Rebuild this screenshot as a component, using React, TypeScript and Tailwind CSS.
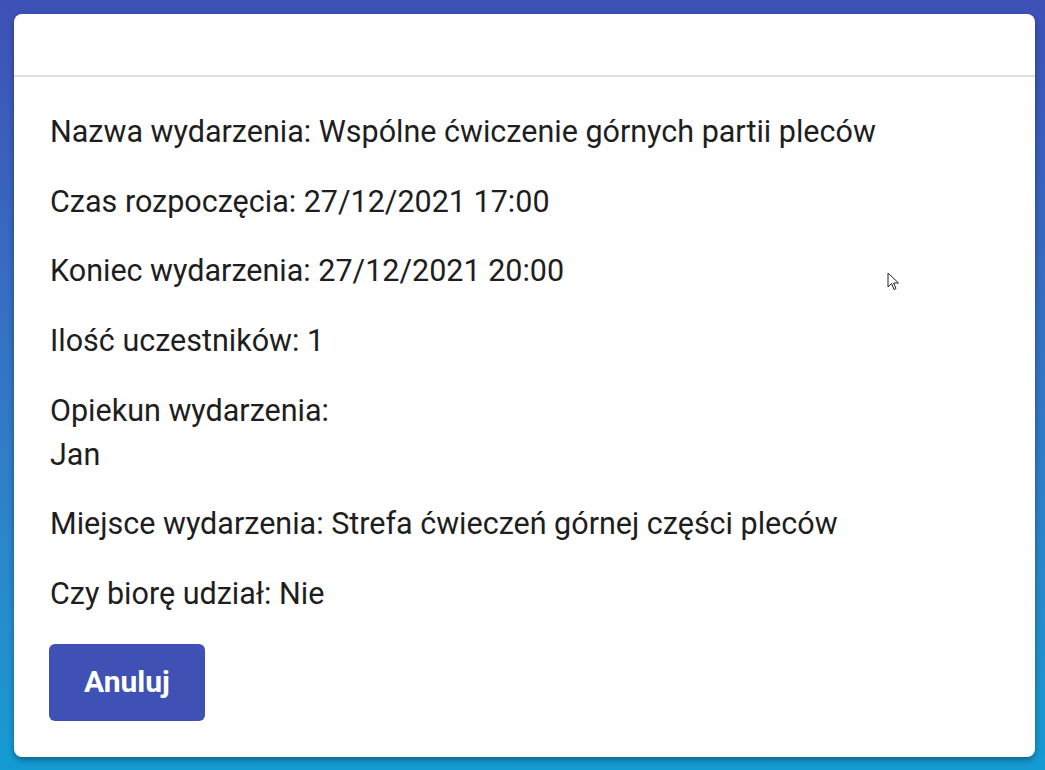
import React from 'react'

const rows: { label: string; value: string; wrap?: boolean }[] = [
  { label: 'Nazwa wydarzenia:', value: 'Wspólne ćwiczenie górnych partii pleców' },
  { label: 'Czas rozpoczęcia:', value: '27/12/2021 17:00' },
  { label: 'Koniec wydarzenia:', value: '27/12/2021 20:00' },
  { label: 'Ilość uczestników:', value: '1' },
  { label: 'Opiekun wydarzenia:', value: 'Jan', wrap: true },
  { label: 'Miejsce wydarzenia:', value: 'Strefa ćwieczeń górnej części pleców' },
  { label: 'Czy biorę udział:', value: 'Nie' },
]

export default function App() {
  return (
    <div
      className="relative w-[1045px] h-[770px] bg-gradient-to-b from-[#3d51b7] to-[#139bd3] pt-[14px] pl-[14px]"
      style={{ fontFamily: 'Roboto, "Noto Sans", sans-serif' }}
    >
      <div className="w-[1021px] h-[743px] bg-white rounded-[8px] shadow-[0_3px_6px_rgba(0,0,0,0.35)] flex flex-col">
        {/* Header */}
        <div className="h-[63px] border-b-2 border-[#e0e0e0]" />

        {/* Body */}
        <div className="pl-[36px] pt-[33px] text-[30.5px] leading-[44px] text-[#1e1e1e]">
          {rows.map((r) => (
            <div key={r.label} className="mb-[25.7px]">
              {r.label}
              {r.wrap ? <br /> : ' '}
              {r.value}
            </div>
          ))}
          <button className="mt-[2px] -ml-[1px] w-[156px] h-[77px] rounded-[6px] bg-[#3f51b5] text-white font-bold text-[30px]">
            Anuluj
          </button>
        </div>
      </div>

      {/* Mouse cursor */}
      <svg className="absolute left-[887px] top-[272px]" width="13" height="20" viewBox="0 0 13 20">
        <path d="M1 1 L1 15 L4.5 11.5 L7 17.5 L9 16.6 L6.6 11 L11.5 11 Z" fill="white" stroke="#222" strokeWidth="1" strokeLinejoin="round" />
      </svg>
    </div>
  )
}
